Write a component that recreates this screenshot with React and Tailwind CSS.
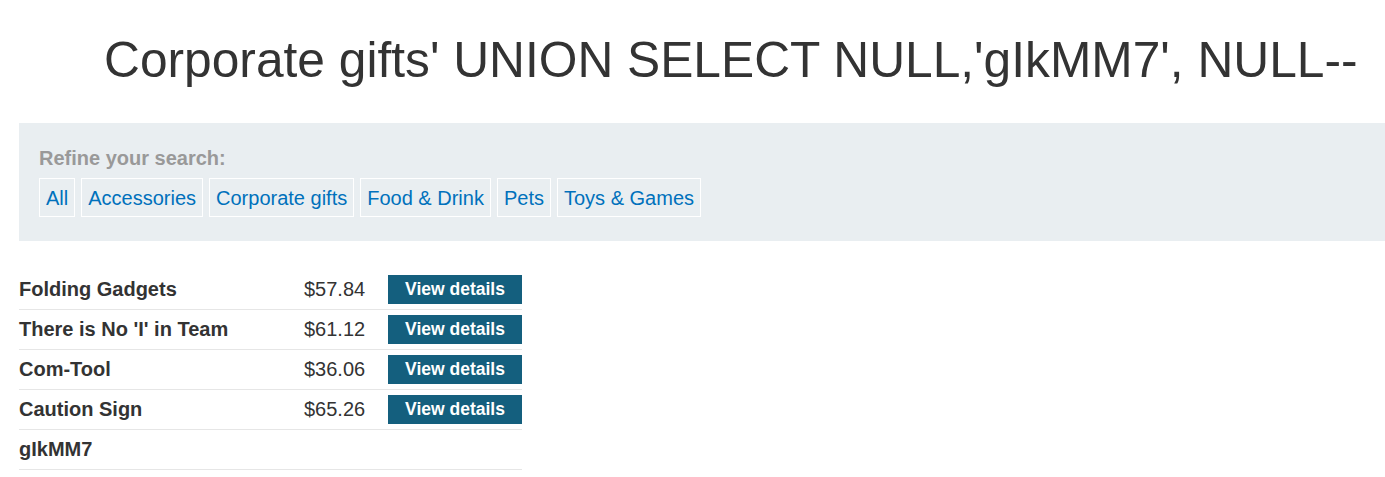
const CATEGORIES = ["All", "Accessories", "Corporate gifts", "Food & Drink", "Pets", "Toys & Games"];

const PRODUCTS = [
  { name: "Folding Gadgets", price: "$57.84" },
  { name: "There is No 'I' in Team", price: "$61.12" },
  { name: "Com-Tool", price: "$36.06" },
  { name: "Caution Sign", price: "$65.26" },
  { name: "gIkMM7" },
];

export default function App() {
  return (
    <div
      className="min-h-[477px] overflow-hidden bg-white text-[#333]"
      style={{ fontFamily: '"Liberation Sans", Arial, sans-serif' }}
    >
      {/* Title */}
      <h1 className="whitespace-nowrap pl-[104px] pt-[31px] text-[49.7px] font-normal leading-[58px]">
        Corporate gifts' UNION SELECT NULL,'gIkMM7', NULL--
      </h1>

      {/* Filter */}
      <section className="ml-[19px] mt-[34px] bg-[#e9eef1] px-[20px] py-[24px]">
        <p className="text-[20px] font-bold leading-[23px] text-[#999]">Refine your search:</p>
        <div className="mt-[8px] flex gap-[6px]">
          {CATEGORIES.map((c) => (
            <a
              key={c}
              href="#"
              className="border border-white px-[6px] pb-[6px] pt-[8px] text-[20px] leading-[23px] text-[#0071bc]"
            >
              {c}
            </a>
          ))}
        </div>
      </section>

      {/* Products */}
      <div className="ml-[19px] mt-[29px] w-[503px]">
        {PRODUCTS.map((p) => (
          <div
            key={p.name}
            className="grid h-[40.1px] grid-cols-[285px_84px_134px] items-center border-b border-[#e6e6e6] text-[20px] leading-[23px]"
          >
            <span className="whitespace-nowrap font-bold">{p.name}</span>
            <span>{p.price}</span>
            {p.price ? (
              <button className="h-[29px] bg-[#145f7e] text-[17.5px] font-bold text-white">View details</button>
            ) : (
              <span />
            )}
          </div>
        ))}
      </div>
    </div>
  );
}
